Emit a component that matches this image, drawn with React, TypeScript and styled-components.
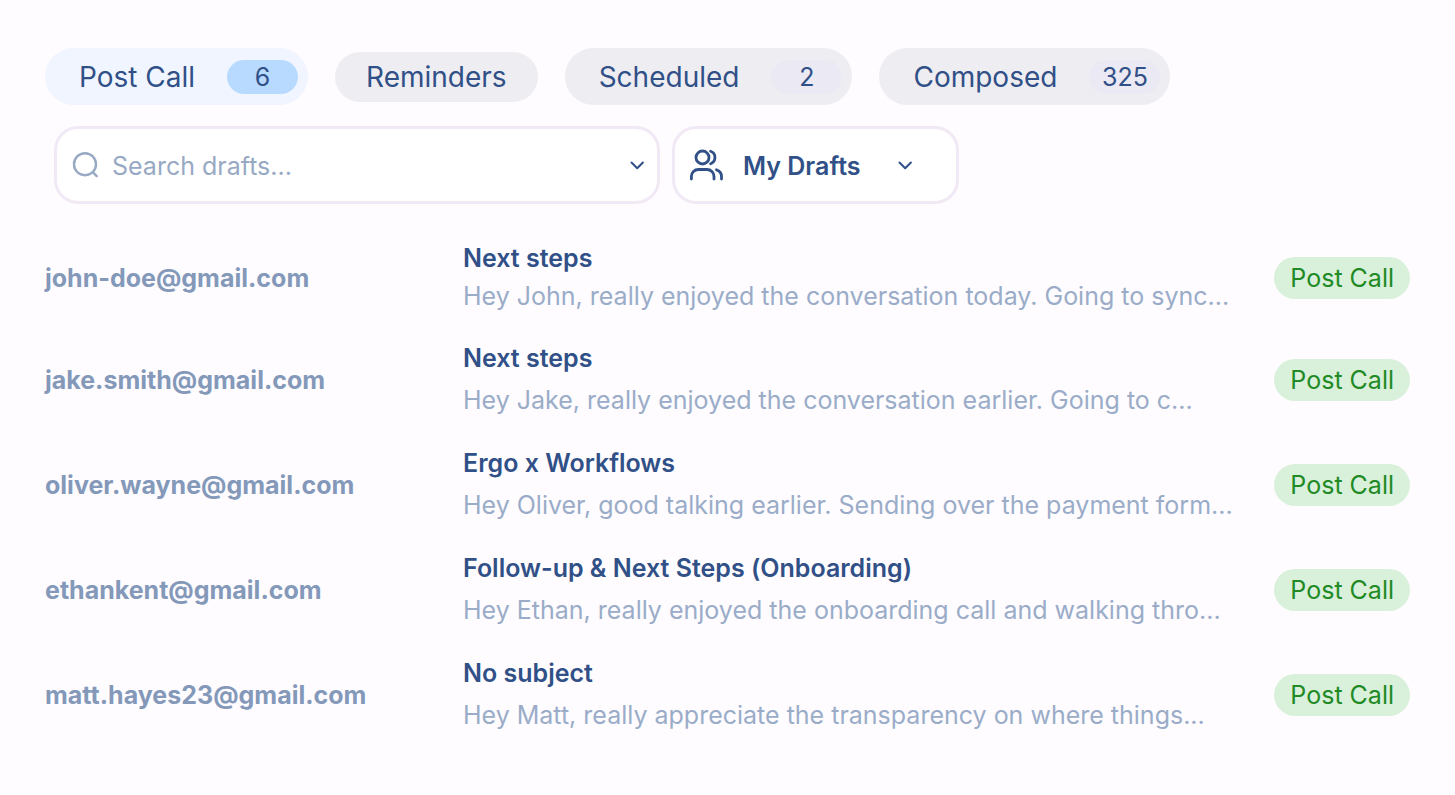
import React, { useState } from "react";
import styled, { createGlobalStyle } from "styled-components";

const GlobalStyle = createGlobalStyle`
  *, *::before, *::after { box-sizing: border-box; }
  body {
    margin: 0;
    background: #fefcff;
    color: #305087;
    font-family: Inter, "Liberation Sans", sans-serif;
    font-variant-ligatures: none;
  }
  button, input, select {
    font: inherit;
    font-variant-ligatures: none;
    color: inherit;
  }
`;

const Page = styled.main`
  padding: 48px 45px 56px;
`;

const Tabs = styled.div`
  display: flex;
  flex-wrap: wrap;
  align-items: center;
  gap: 27px;
`;

const Tab = styled.button<{ $active: boolean; $plain: boolean }>`
  display: flex;
  align-items: center;
  gap: ${(p) => (p.$plain ? 0 : 32)}px;
  height: ${(p) => (p.$plain ? 50 : 57)}px;
  padding: ${(p) => (p.$plain ? "0 31px" : "0 10px 0 34px")};
  border: 0;
  border-radius: 29px;
  background: ${(p) => (p.$active ? "#f1f5ff" : "#eeedf2")};
  font-size: 28px;
  line-height: 34px;
  cursor: pointer;
`;

const Count = styled.span<{ $active: boolean }>`
  min-width: 71px;
  border-radius: 17px;
  background: ${(p) => (p.$active ? "#b9daff" : "#ebe9f3")};
  font-size: 25px;
  line-height: 34px;
  text-align: center;
`;

const Filters = styled.div`
  display: flex;
  gap: 12px;
  margin: 21px 0 38px;
  padding-left: 9px;
`;

const Field = styled.div`
  display: flex;
  align-items: center;
  height: 78px;
  border: 3px solid #f1e9f5;
  border-radius: 24px;
  background: #fff;
`;

const SearchField = styled(Field)`
  flex: 0 1 606px;
  gap: 12px;
  padding: 0 10px 0 15px;
`;

const SearchInput = styled.input`
  flex: 1;
  min-width: 0;
  padding: 2px 0 0;
  border: 0;
  outline: 0;
  background: transparent;
  font-size: 25px;
  line-height: 32px;
  &::placeholder { color: #98a9c4; opacity: 1; }
`;

const IconButton = styled.button`
  display: flex;
  padding: 0;
  border: 0;
  background: transparent;
  cursor: pointer;
`;

const OwnerField = styled(Field)`
  position: relative;
  flex: 0 0 287px;
`;

const OwnerSelect = styled.select`
  width: 100%;
  height: 100%;
  padding: 2px 48px 0 68px;
  border: 0;
  border-radius: 21px;
  outline: 0;
  appearance: none;
  background: transparent;
  font-size: 25px;
  font-weight: 600;
  cursor: pointer;
`;

const OwnerIcons = styled.span`
  position: absolute;
  inset: 0 41px 0 14px;
  display: flex;
  align-items: center;
  justify-content: space-between;
  pointer-events: none;
`;

const Drafts = styled.ul`
  display: flex;
  flex-direction: column;
  gap: 29px;
  margin: 0;
  padding: 0;
  list-style: none;
`;

const Draft = styled.li`
  display: grid;
  grid-template-columns: 386px minmax(0, 1fr) auto;
  align-items: center;
  column-gap: 32px;
`;

const Email = styled.span`
  color: #8499b9;
  font-size: 25px;
  font-weight: 700;
  line-height: 32px;
`;

const Message = styled.div<{ $tight: boolean }>`
  display: flex;
  flex-direction: column;
  gap: ${(p) => (p.$tight ? 6 : 10)}px;
  padding-bottom: ${(p) => (p.$tight ? 1 : 2)}px;
  font-size: 25px;
  line-height: 32px;
`;

const Subject = styled.h2`
  margin: 0;
  font-size: 25px;
  font-weight: 600;
`;

const Preview = styled.p`
  margin: 0;
  overflow: hidden;
  color: #9aacc8;
  text-overflow: ellipsis;
  white-space: nowrap;
`;

const Tag = styled.span`
  padding: 0 16px;
  border-radius: 21px;
  background: #d9f0db;
  color: #218a25;
  font-size: 25px;
  line-height: 42px;
`;

const tabs = [
  { label: "Post Call", count: "6" },
  { label: "Reminders" },
  { label: "Scheduled", count: "2" },
  { label: "Composed", count: "325" },
];

const drafts = [
  { email: "john-doe@gmail.com", subject: "Next steps", preview: "Hey John, really enjoyed the conversation today. Going to sync..." },
  { email: "jake.smith@gmail.com", subject: "Next steps", preview: "Hey Jake, really enjoyed the conversation earlier. Going to c..." },
  { email: "oliver.wayne@gmail.com", subject: "Ergo x Workflows", preview: "Hey Oliver, good talking earlier. Sending over the payment form..." },
  { email: "ethankent@gmail.com", subject: "Follow-up & Next Steps (Onboarding)", preview: "Hey Ethan, really enjoyed the onboarding call and walking thro..." },
  { email: "matt.hayes23@gmail.com", subject: "No subject", preview: "Hey Matt, really appreciate the transparency on where things..." },
];

const Chevron = () => (
  <svg width="20" height="20" viewBox="0 0 20 20" fill="none" stroke="#305087" strokeWidth="2" strokeLinecap="round" strokeLinejoin="round" aria-hidden="true">
    <path d="M4.5 7.5l5.7 5.7 5.7-5.7" />
  </svg>
);

const SearchIcon = () => (
  <svg width="28" height="28" viewBox="0 0 28 28" fill="none" stroke="#98a9c4" strokeWidth="2.4" strokeLinecap="round" aria-hidden="true">
    <circle cx="13" cy="13.2" r="11" />
    <path d="M20.8 21.2l3.9 3.9" />
  </svg>
);

const PeopleIcon = () => (
  <svg width="34" height="34" viewBox="0 0 34 34" fill="none" stroke="#305087" strokeWidth="2.8" strokeLinecap="round" strokeLinejoin="round" aria-hidden="true">
    <circle cx="13.5" cy="9.5" r="6.5" />
    <path d="M2.4 31v-2.5a7 7 0 0 1 7-7h8.6a7 7 0 0 1 7 7V31" />
    <path d="M21.6 3.3a6.6 6.6 0 0 1 0 12.4" />
    <path d="M27.5 21.8a7 7 0 0 1 5 6.7V31" />
  </svg>
);

export default function App() {
  const [active, setActive] = useState("Post Call");
  return (
    <>
      <GlobalStyle />
      <Page>
        <Tabs role="tablist" aria-label="Draft types">
          {tabs.map(({ label, count }) => (
            <Tab
              key={label}
              type="button"
              role="tab"
              aria-selected={active === label}
              $active={active === label}
              $plain={!count}
              onClick={() => setActive(label)}
            >
              <span>{label}</span>
              {count && <Count $active={active === label}>{count}</Count>}
            </Tab>
          ))}
        </Tabs>
        <Filters>
          <SearchField>
            <SearchIcon />
            <SearchInput type="text" placeholder="Search drafts..." aria-label="Search drafts" />
            <IconButton type="button" aria-label="Search options">
              <Chevron />
            </IconButton>
          </SearchField>
          <OwnerField>
            <OwnerSelect aria-label="Draft owner">
              <option>My Drafts</option>
            </OwnerSelect>
            <OwnerIcons>
              <PeopleIcon />
              <Chevron />
            </OwnerIcons>
          </OwnerField>
        </Filters>
        <Drafts>
          {drafts.map((draft, index) => (
            <Draft key={draft.email}>
              <Email>{draft.email}</Email>
              <Message $tight={index === 0}>
                <Subject>{draft.subject}</Subject>
                <Preview>{draft.preview}</Preview>
              </Message>
              <Tag>Post Call</Tag>
            </Draft>
          ))}
        </Drafts>
      </Page>
    </>
  );
}
